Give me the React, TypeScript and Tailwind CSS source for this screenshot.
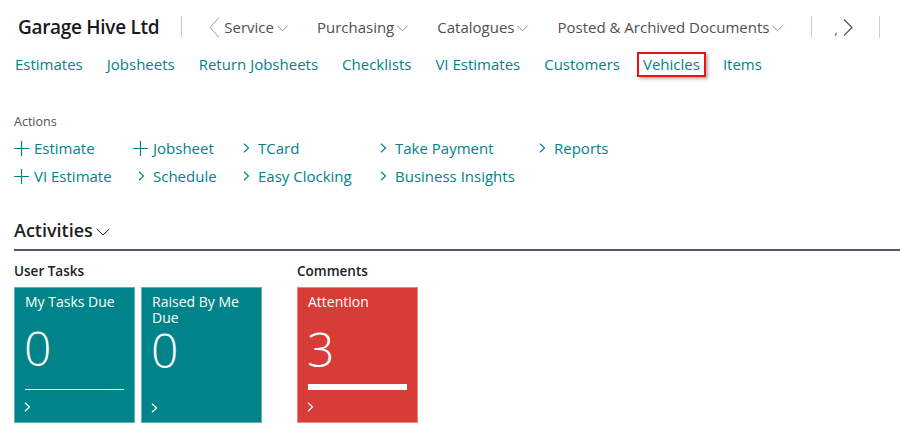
import React from "react";

const Down = () => (
    <svg width="11" height="7" viewBox="0 0 11 7" className="ml-[3px] mt-[3px]">
        <path d="M0.5 0.8 L5.5 5.8 L10.5 0.8" fill="none" stroke="#8a8a8a" strokeWidth="1" />
    </svg>
);

const Chevron = ({ color = "#00838a", h = 10 }: { color?: string; h?: number }) => (
    <svg width="7" height={h} viewBox={`0 0 7 ${h}`}>
        <path d={`M1 0.8 L5.5 ${h / 2} L1 ${h - 0.8}`} fill="none" stroke={color} strokeWidth="1.2" />
    </svg>
);

const Plus = () => (
    <svg width="15" height="15" viewBox="0 0 15 15">
        <path d="M7.5 0 V15 M0 7.5 H15" stroke="#00838a" strokeWidth="1.2" />
    </svg>
);

const menus = ["Service", "Purchasing", "Catalogues", "Posted & Archived Documents"];
const navLinks = ["Estimates", "Jobsheets", "Return Jobsheets", "Checklists", "VI Estimates", "Customers", "Vehicles", "Items"];

const actionRows = [
    [
        { icon: "plus", label: "Estimate" },
        { icon: "plus", label: "Jobsheet" },
        { icon: "chev", label: "TCard" },
        { icon: "chev", label: "Take Payment" },
        { icon: "chev", label: "Reports" },
    ],
    [
        { icon: "plus", label: "VI Estimate" },
        { icon: "chev", label: "Schedule" },
        { icon: "chev", label: "Easy Clocking" },
        { icon: "chev", label: "Business Insights" },
    ],
];

const Tile = ({ title, value, red = false }: { title: string; value: string; red?: boolean }) => (
    <div
        className={
            "w-[121px] h-[136px] flex flex-col px-[10px] pt-[6px] pb-[10px] text-white border " +
            (red ? "bg-[#d73d36] border-[#e98480]" : "bg-[#008489] border-[#5fb3b6]")
        }
    >
        <div className="text-[14px] leading-[16px] h-[37px]">{title}</div>
        <div className="text-[48px] font-light leading-[48px] -ml-[1px] h-[48px]">{value}</div>
        {red ? (
            <div className="mt-[11px] h-[7px] bg-white" />
        ) : (
            <div className="mt-[17px] h-px bg-white" />
        )}
        <div className="mt-[12px] -ml-[1px]">
            <Chevron color="#ffffff" h={10} />
        </div>
    </div>
);

export default function App() {
    return (
        <div className="w-[900px] h-[439px] bg-white overflow-hidden font-['Open_Sans',sans-serif] text-[#212121]">
            <div className="flex items-center h-[46px] mt-[4px]">
                <div className="pl-[18px] text-[19px] font-semibold text-[#1a1a1a] tracking-[-0.3px]">Garage Hive Ltd</div>
                <div className="ml-[22px] w-px h-[22px] bg-[#c8c8c8]" />
                <svg width="11" height="21" viewBox="0 0 11 21" className="ml-[27px]">
                    <path d="M10 0.5 L1 10.5 L10 20.5" fill="none" stroke="#9a9a9a" strokeWidth="1" />
                </svg>
                <div className="flex items-center gap-[29px] ml-[4px] text-[15px] text-[#505050]">
                    {menus.map((m) => (
                        <div key={m} className="flex items-center">
                            {m}
                            <Down />
                        </div>
                    ))}
                </div>
                <div className="ml-[28px] w-px h-[22px] bg-[#d0d0d0]" />
                <div className="ml-[22px] flex items-center text-[#505050]">
                    <span className="text-[12px] mt-[6px]">,</span>
                    <svg width="10" height="17" viewBox="0 0 10 17" className="ml-[5px]">
                        <path d="M1 0.5 L9 8.5 L1 16.5" fill="none" stroke="#505050" strokeWidth="1.2" />
                    </svg>
                </div>
                <div className="ml-[26px] w-px h-[22px] bg-[#d0d0d0]" />
            </div>

            <div className="flex items-center gap-[24px] pl-[15px] h-[28px] text-[15px] text-[#00838a]">
                {navLinks.map((n) =>
                    n === "Vehicles" ? (
                        <span
                            key={n}
                            className="-mx-[7px] px-[4px] border-2 border-[#ee1111] shadow-[2px_2px_3px_rgba(0,0,0,0.3)] leading-[21px]"
                        >
                            {n}
                        </span>
                    ) : (
                        <span key={n}>{n}</span>
                    )
                )}
            </div>

            <div className="pl-[14px] mt-[36px] text-[12.5px] text-[#505050] leading-[16px]">Actions</div>
            <div className="pl-[14px] mt-[4px] text-[15px] text-[#00838a]">
                {actionRows.map((row, i) => (
                    <div key={i} className="grid grid-cols-[119px_105px_137px_159px_auto] h-[28px] items-center">
                        {row.map((a) => (
                            <div key={a.label} className="flex items-center">
                                {a.icon === "plus" ? (
                                    <div className="w-[20px] flex items-center">
                                        <Plus />
                                    </div>
                                ) : (
                                    <div className="w-[20px] pl-[5px] flex items-center">
                                        <Chevron />
                                    </div>
                                )}
                                <span>{a.label}</span>
                            </div>
                        ))}
                    </div>
                ))}
            </div>

            <div className="pl-[14px] mt-[28px] flex items-center text-[18px] font-semibold text-[#212121] leading-[24px]">
                Activities
                <svg width="14" height="8" viewBox="0 0 14 8" className="ml-[3px] mt-[3px]">
                    <path d="M0.5 0.8 L7 7 L13.5 0.8" fill="none" stroke="#333" strokeWidth="1" />
                </svg>
            </div>
            <div className="ml-[14px] mt-[7px] h-[2px] bg-[#4b586a]" />

            <div className="flex pl-[14px] mt-[11px] gap-[35px]">
                <div>
                    <div className="text-[13.5px] font-semibold leading-[18px] text-[#212121]">User Tasks</div>
                    <div className="flex gap-[6px] mt-[7px]">
                        <Tile title="My Tasks Due" value="0" />
                        <Tile title="Raised By Me Due" value="0" />
                    </div>
                </div>
                <div>
                    <div className="text-[13.5px] font-semibold leading-[18px] text-[#212121]">Comments</div>
                    <div className="flex gap-[6px] mt-[7px]">
                        <Tile title="Attention" value="3" red />
                    </div>
                </div>
            </div>
        </div>
    );
}
